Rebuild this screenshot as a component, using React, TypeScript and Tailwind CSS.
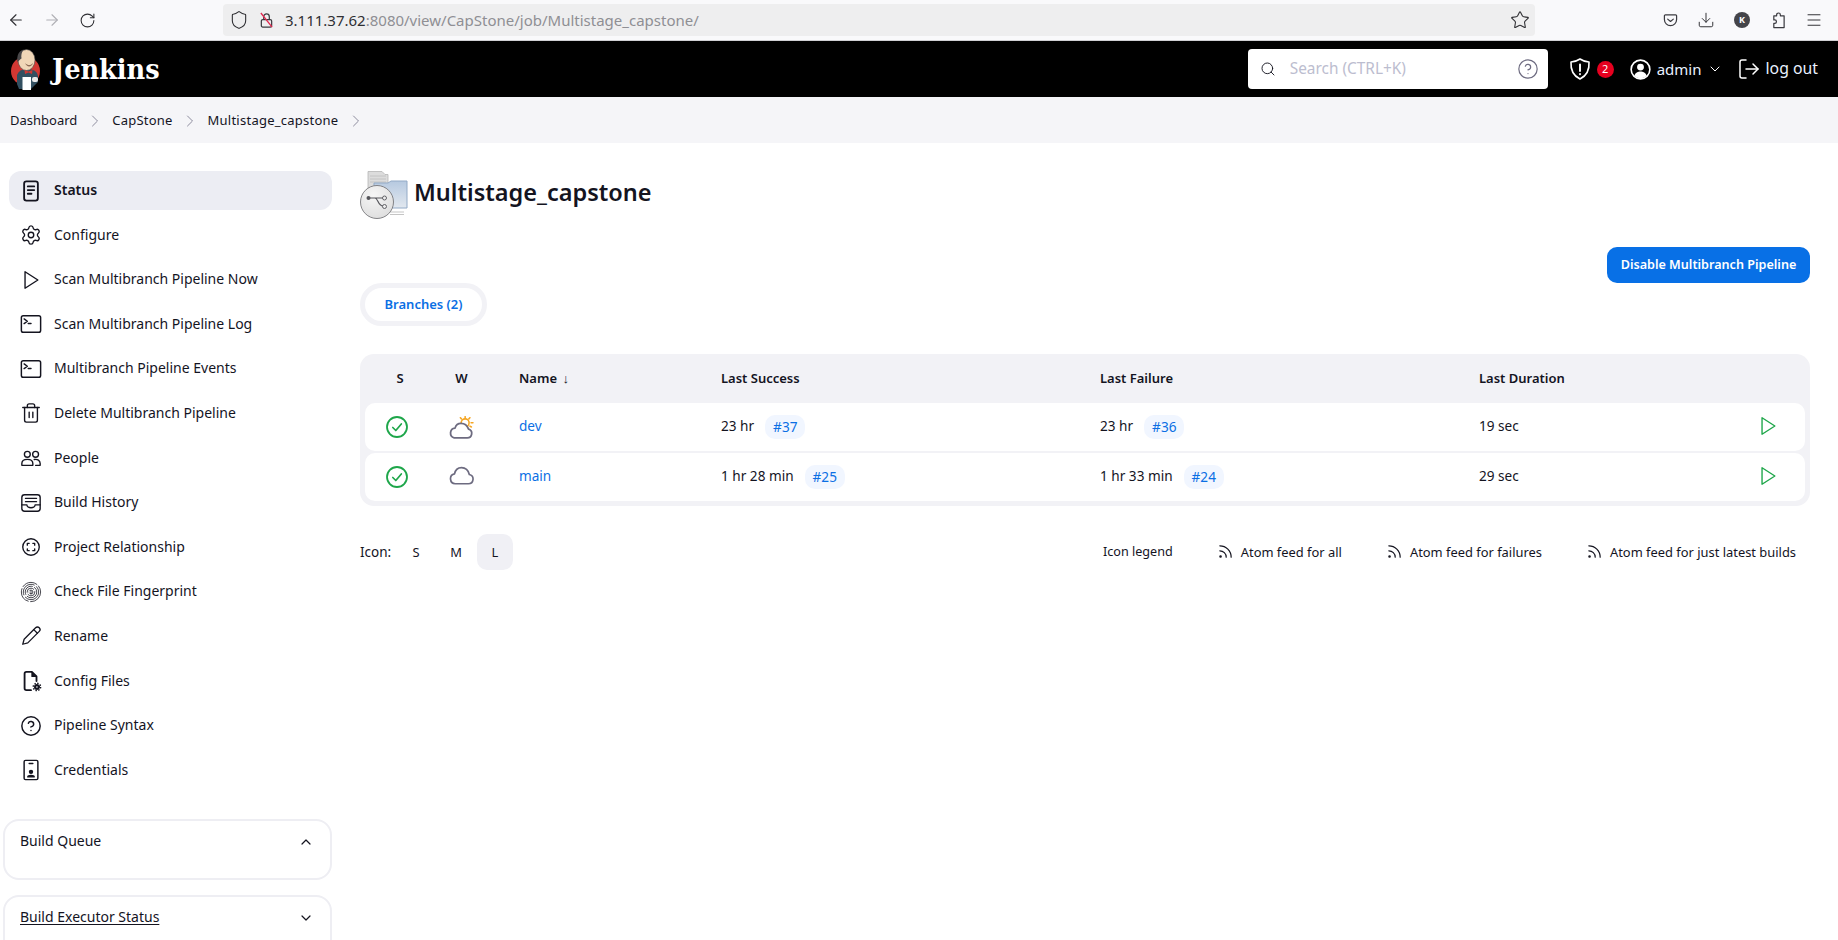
import {
  ArrowLeft, ArrowRight, RotateCw, Shield, Star, Download, Menu, Search, CircleHelp,
  ChevronRight, ChevronDown, ChevronUp, LogOut, Settings, Trash2, Rss,
} from "lucide-react";

const font = "font-['Noto_Sans','Open_Sans',sans-serif]";
const ic = "w-[22px] h-[22px]";
const tableCols = "grid grid-cols-[70px_53px_202px_379px_379px_1fr] items-center";

const Line = ({ children, sw = 1.5 }: { children: React.ReactNode; sw?: number }) => (
  <svg viewBox="0 0 24 24" className={ic} fill="none" stroke="currentColor" strokeWidth={sw} strokeLinecap="round" strokeLinejoin="round">
    {children}
  </svg>
);

const Terminal = () => (
  <Line sw={1.6}>
    <rect x="1.5" y="3" width="21" height="18" rx="2" />
    <path d="M4.5 6.5l3.5 2.5-3.5 2.5M9 11.5h3" />
  </Line>
);

const StatusDoc = () => (
  <Line sw={2}>
    <rect x="4.5" y="1.5" width="15" height="21" rx="2.5" />
    <path d="M8.5 7h7M8.5 11h7M8.5 15h4" />
  </Line>
);

const Badge = () => (
  <Line sw={1.6}>
    <rect x="4.5" y="1.5" width="15" height="21" rx="1.5" />
    <path d="M10 5h4" />
    <circle cx="12" cy="14" r="1.6" fill="currentColor" />
    <path d="M8.5 19.5c.5-2 6.5-2 7 0z" fill="currentColor" />
  </Line>
);

const PlayIcon = () => (
  <Line>
    <path d="M5.5 3l14 9-14 9z" />
  </Line>
);

const People = () => (
  <Line sw={1.5}>
    <circle cx="8" cy="8" r="3.2" />
    <circle cx="17" cy="8" r="3.2" />
    <path d="M2 20v-2c0-3 2.8-4.5 6-4.5s6 1.5 6 4.5v2z" />
    <path d="M15.5 13.6c3.6-.6 6.5 1 6.5 4.4v2h-5" />
  </Line>
);

const History = () => (
  <Line sw={1.5}>
    <rect x="2" y="3" width="20" height="18" rx="3" />
    <path d="M2 14h5.5a4.5 3.2 0 0 0 9 0H22" />
    <path d="M6 7h12M6 10.5h12" />
  </Line>
);

const Relationship = () => (
  <Line sw={1.5}>
    <circle cx="12" cy="12" r="9" />
    <path d="M8 10V8h2M14 8h2v2M16 14v2h-2M10 16H8v-2" />
  </Line>
);

const FingerprintDense = () => (
  <svg viewBox="0 0 24 24" className={ic} fill="none" stroke="currentColor" strokeWidth="0.85" strokeLinecap="round">
    <circle cx="12" cy="12" r="10.5" strokeDasharray="17 2.5" />
    <circle cx="12" cy="12" r="8.4" strokeDasharray="20 3" />
    <circle cx="12" cy="12" r="6.3" strokeDasharray="14 2.5" />
    <circle cx="12" cy="12" r="4.2" strokeDasharray="10 2.5" />
    <circle cx="12" cy="12" r="2.1" strokeDasharray="5 2" />
    <path d="M12 11v3" />
  </svg>
);

const PencilIcon = () => (
  <Line sw={1.4}>
    <path d="M3 21l1.5-5.5L17 3a2.6 2.6 0 0 1 4 4L8.5 19.5z" />
    <path d="M15 5l4 4" />
  </Line>
);

const ConfigFile = () => (
  <Line sw={2}>
    <path d="M12 22H7a2 2 0 0 1-2-2V4a2 2 0 0 1 2-2h6l5 5v5" />
    <path d="M13 2.5v4.5h4.5" fill="currentColor" strokeWidth="1.2" />
    <circle cx="18.5" cy="18.5" r="2.8" fill="currentColor" strokeWidth="1" />
    <circle cx="18.5" cy="18.5" r="4" strokeWidth="1.6" strokeDasharray="1.6 1.5" strokeLinecap="butt" />
    <circle cx="18.5" cy="18.5" r="0.9" fill="#fff" stroke="none" />
  </Line>
);

const CloudIcon = ({ sun }: { sun?: boolean }) => (
  <svg viewBox="0 0 24 22" className="w-[25px] h-[23px] mr-[1px] mb-[-1px]" fill="none" strokeLinecap="round" strokeLinejoin="round">
    {sun ? (
      <>
        <g stroke="#f5a623" strokeWidth="1.5">
          <circle cx="15.5" cy="6.5" r="3.8" />
          <path d="M15.5 .6v1.4M11 1.6l1 1.2M20 1.6l-1 1.2M23 6.500h-1.800M21.500 10.500l-1.400-.8" />
        </g>
        <path d="M5 21h12.500a4.300 4.300 0 0 0 1.300-8.400C17.500 9 14.500 7 11.500 7c-3 0-5 2-5.700 4.600A4.800 4.800 0 0 0 5 21z" fill="#fff" stroke="#6d6b80" strokeWidth="1.7" />
      </>
    ) : (
      <path d="M6 17h12.500a4.500 4.500 0 0 0 1-8.900C18.500 4 15.500 1.500 12 1.500 8.500 1.500 6 4 5.300 7.500A4.800 4.800 0 0 0 6 17z" fill="#fff" stroke="#6d6b80" strokeWidth="1.6" />
    )}
  </svg>
);

const StatusOk = () => (
  <svg viewBox="0 0 22 22" className="w-[22px] h-[22px]" fill="none" stroke="#1ea64a" strokeLinecap="round" strokeLinejoin="round">
    <circle cx="11" cy="11" r="10" strokeWidth="1.8" />
    <path d="M6.800 11.500l3 3 5.500-6.500" strokeWidth="1.7" />
  </svg>
);

const JenkinsLogo = () => (
  <svg viewBox="0 0 50 54" className="w-[50px] h-[54px]">
    <circle cx="20.500" cy="29" r="14.500" fill="#d33833" />
    <path d="M12 42V33q2-6 10-6 10 0 11 7v6l-7 7H14z" fill="#335061" />
    <ellipse cx="21.500" cy="18" rx="8.500" ry="10.500" fill="#f0d6b7" stroke="#49484a" strokeWidth="0.6" />
    <path d="M12.500 20c-1-6 1-11 6-12.500-2 3-2.500 6-2 9-1 .5-2.500 2-4 3.500z" fill="#49484a" />
    <path d="M20 21c3 3 6 2.500 8 0-1 4-6 5-8 0z" fill="#8c6a55" />
    <path d="M19.500 28l4 1.500 4-1.500-.5 4-3.500-1.500-3.500 1.500z" fill="#d33833" />
    <rect x="17.500" y="35" width="8.500" height="13" fill="#fff" />
    <rect x="27" y="35" width="6" height="5" rx="2" fill="#e8e8e8" />
  </svg>
);

const FolderIcon = () => (
  <svg viewBox="0 0 48 48" className="w-[48px] h-[48px] shrink-0">
    <defs>
      <linearGradient id="folderBlue" x1="0" y1="0" x2="0" y2="1">
        <stop offset="0" stopColor="#b6c9e0" />
        <stop offset="1" stopColor="#e2e8ef" />
      </linearGradient>
      <radialGradient id="branchDisc" cx="0.4" cy="0.3" r="0.8">
        <stop offset="0" stopColor="#f6f6f6" />
        <stop offset="1" stopColor="#dcdcdc" />
      </radialGradient>
    </defs>
    <path d="M8 0.500h14l3 3h3v30H8z" fill="#dcdcdc" stroke="#b5b5b5" strokeWidth="0.8" />
    <path d="M10 5h16M10 8h16M10 11h16" stroke="#bdbdbd" strokeWidth="0.8" />
    <path d="M14 12h14l3-2h16v27H14z" fill="url(#folderBlue)" stroke="#93aac6" strokeWidth="1" />
    <path d="M30 41h14M30 43.500h14" stroke="#c5c5c5" strokeWidth="1" />
    <circle cx="17" cy="31" r="16.500" fill="url(#branchDisc)" stroke="#77777a" strokeWidth="0.9" />
    <path d="M8 27h7c3 0 3 8 8 8M15 27h8" fill="none" stroke="#55555a" strokeWidth="1.2" />
    <circle cx="8.500" cy="27" r="2" fill="#55555a" />
    <circle cx="24.500" cy="27" r="2" fill="#eee" stroke="#55555a" strokeWidth="0.9" />
    <circle cx="24.500" cy="35.500" r="2" fill="#eee" stroke="#55555a" strokeWidth="0.9" />
  </svg>
);

const sideItems = [
  { label: "Status", icon: <StatusDoc />, active: true },
  { label: "Configure", icon: <Settings className={ic} strokeWidth={1.5} /> },
  { label: "Scan Multibranch Pipeline Now", icon: <PlayIcon /> },
  { label: "Scan Multibranch Pipeline Log", icon: <Terminal /> },
  { label: "Multibranch Pipeline Events", icon: <Terminal /> },
  { label: "Delete Multibranch Pipeline", icon: <Trash2 className={ic} strokeWidth={1.5} /> },
  { label: "People", icon: <People /> },
  { label: "Build History", icon: <History /> },
  { label: "Project Relationship", icon: <Relationship /> },
  { label: "Check File Fingerprint", icon: <FingerprintDense /> },
  { label: "Rename", icon: <PencilIcon /> },
  { label: "Config Files", icon: <ConfigFile /> },
  { label: "Pipeline Syntax", icon: <CircleHelp className={ic} strokeWidth={1.6} /> },
  { label: "Credentials", icon: <Badge /> },
];

const rows = [
  { name: "dev", sun: true, ok: "23 hr", okN: "#37", bad: "23 hr", badN: "#36", dur: "19 sec" },
  { name: "main", sun: false, ok: "1 hr 28 min", okN: "#25", bad: "1 hr 33 min", badN: "#24", dur: "29 sec" },
];

const Feed = ({ label }: { label: string }) => (
  <div className="flex items-center gap-[7px]">
    <Rss className="w-[17px] h-[17px] text-[#14141f]" strokeWidth={1.7} />
    <span className="pt-[1px]">{label}</span>
  </div>
);

const Run = ({ time, num }: { time: string; num: string }) => (
  <div className="pl-[31px] flex items-center gap-[11px] whitespace-nowrap">
    <span className="pb-[1px]">{time}</span>
    <span className="h-[24px] px-[8px] rounded-[10px] bg-[#f1f6ff] text-[#0b6fe4] flex items-center">{num}</span>
  </div>
);

export default function App() {
  return (
    <div className={`w-[1838px] h-[940px] overflow-hidden bg-white text-[#14141f] ${font}`}>
      {/* Browser chrome */}
      <div className="h-[41px] bg-[#f9f9fb] border-b border-[#d0d0d3] flex items-center text-[#2f2f33]">
        <div className="w-[223px] pl-[7px] flex items-center gap-[18px]">
          <ArrowLeft className="w-[18px] h-[18px]" strokeWidth={1.5} />
          <ArrowRight className="w-[18px] h-[18px] text-[#b0b0b5]" strokeWidth={1.5} />
          <RotateCw className="w-[17px] h-[17px]" strokeWidth={1.5} />
        </div>
        <div className="w-[1312px] h-[32px] bg-[#eeeeef] rounded-[4px] flex items-center pl-[6px] pr-[5px]">
          <Shield className="w-[20px] h-[20px]" strokeWidth={1.3} />
          <svg viewBox="0 0 16 18" className="w-[15px] h-[17px] ml-[10px]" fill="none" stroke="#3b3b40" strokeWidth="1.3">
            <rect x="2.500" y="8" width="11" height="8" rx="1.500" />
            <path d="M5 8V5a3 3 0 0 1 6 0v3" />
            <path d="M2 1l12 15" stroke="#e22850" strokeWidth="1.400" />
          </svg>
          <span className="ml-[11px] text-[15px]">3.111.37.62<span className="text-[#8f8f94]">:8080/view/CapStone/job/Multistage_capstone/</span></span>
          <Star className="w-[20px] h-[20px] ml-auto" strokeWidth={1.3} />
        </div>
        <div className="flex items-center ml-[117px]">
          <span className="w-[36px] flex justify-center">
            <svg viewBox="0 0 16 16" className="w-[15px] h-[15px]" fill="none" stroke="#3b3b40" strokeWidth="1.3" strokeLinecap="round" strokeLinejoin="round">
              <path d="M2.500 2h11a1 1 0 0 1 1 1v4a6.500 6.500 0 0 1-13 0V3a1 1 0 0 1 1-1z" />
              <path d="M5 6.500l3 2.500 3-2.500" />
            </svg>
          </span>
          <span className="w-[36px] flex justify-center"><Download className="w-[18px] h-[18px]" strokeWidth={1.3} /></span>
          <span className="w-[36px] flex justify-center">
            <span className="w-[16px] h-[16px] rounded-full bg-[#444449] text-white text-[9px] font-bold flex items-center justify-center">K</span>
          </span>
          <span className="w-[36px] flex justify-center">
            <svg viewBox="0 0 16 18" className="w-[15px] h-[17px]" fill="none" stroke="#3b3b40" strokeWidth="1.3" strokeLinejoin="round">
              <path d="M6 4V3a2 2 0 0 1 4 0v1h4v12.500H3V12h1a1.800 1.800 0 0 0 0-3.600H3V4z" />
            </svg>
          </span>
          <span className="w-[36px] flex justify-center"><Menu className="w-[18px] h-[18px]" strokeWidth={1.3} /></span>
        </div>
      </div>

      {/* Jenkins header */}
      <header className="h-[56px] bg-black text-white flex items-center">
        <div className="ml-[5px]"><JenkinsLogo /></div>
        <span className="ml-[-3px] text-[28.5px] font-bold font-['DejaVu_Serif_Condensed','DejaVu_Serif','Liberation_Serif',serif]">Jenkins</span>
        <div className="ml-auto flex items-center">
          <div className="w-[300px] h-[40px] bg-white rounded-[4px] flex items-center pl-[12px] pr-[9px] text-[#6d6b80]">
            <Search className="w-[16px] h-[16px] text-[#14141f]" strokeWidth={1.4} />
            <span className="ml-[14px] text-[15.4px] text-[#bcbdcf]">Search (CTRL+K)</span>
            <CircleHelp className="w-[22px] h-[22px] ml-auto" strokeWidth={1.3} />
          </div>
          <svg viewBox="0 0 22 22" className="w-[22px] h-[22px] ml-[21px]" fill="none" stroke="#fff" strokeWidth="1.600" strokeLinecap="round" strokeLinejoin="round">
            <path d="M11 1c3 2 6 3 9 3 .5 7-1 13-9 17C3 17 1.500 11 2 4c3 0 6-1 9-3z" />
            <path d="M11 6.500v6.500M11 16v.2" strokeWidth="1.900" />
          </svg>
          <div className="ml-[6px] w-[17px] h-[17px] rounded-full bg-[#e6001f] text-[11px] flex items-center justify-center">2</div>
          <svg viewBox="0 0 22 22" className="w-[21px] h-[21px] ml-[16px]">
            <circle cx="11" cy="11" r="9.800" fill="none" stroke="#fff" strokeWidth="1.700" />
            <circle cx="11" cy="8.500" r="3.600" fill="#fff" />
            <path d="M4.500 17.500c1-3.500 4-4.500 6.500-4.500s5.500 1 6.500 4.500c-3.500 3.500-9.500 3.500-13 0z" fill="#fff" />
          </svg>
          <span className="ml-[6px] text-[15px] text-[#e9f1ff]">admin</span>
          <ChevronDown className="w-[16px] h-[16px] ml-[5px]" strokeWidth={1.5} />
          <LogOut className="w-[24px] h-[24px] ml-[14px]" strokeWidth={1.5} />
          <span className="ml-[5px] mr-[20px] text-[15.8px] text-[#e9f1ff]">log out</span>
        </div>
      </header>

      {/* Breadcrumb */}
      <nav className="h-[46px] bg-[#f5f5f8] flex items-center pl-[10px] pt-[1px] text-[13px]">
        <span>Dashboard</span>
        <ChevronRight className="w-[20px] h-[20px] mx-[7.5px] text-[#8d8c9e]" strokeWidth={1.2} />
        <span className="tracking-[0.2px]">CapStone</span>
        <ChevronRight className="w-[20px] h-[20px] mx-[7.5px] text-[#8d8c9e]" strokeWidth={1.2} />
        <span className="tracking-[0.25px]">Multistage_capstone</span>
        <ChevronRight className="w-[20px] h-[20px] ml-[7.5px] text-[#8d8c9e]" strokeWidth={1.2} />
      </nav>

      <div className="flex">
        {/* Sidebar */}
        <aside className="w-[360px] shrink-0 pl-[3px] pt-[28px]">
          <div className="w-[323px] ml-[6px] flex flex-col">
            {sideItems.map((it) => (
              <div
                key={it.label}
                className={`h-[39px] mb-[5.6px] rounded-[12px] flex items-center pl-[11px] text-[14px] ${it.active ? "bg-[#ecedf3] font-semibold" : ""}`}
              >
                <span className="w-[22px] flex justify-center">{it.icon}</span>
                <span className="ml-[12px] pb-[2px]">{it.label}</span>
              </div>
            ))}
          </div>
          <div className="w-[329px] mt-[24px] h-[61px] border-2 border-[#eeeef3] rounded-[16px] pl-[15px] pr-[16px] pt-[9px] flex justify-between items-start text-[14px]">
            <span>Build Queue</span>
            <ChevronUp className="w-[16px] h-[16px] mt-[4px]" strokeWidth={1.8} />
          </div>
          <div className="w-[329px] mt-[15px] h-[62px] border-2 border-[#eeeef3] rounded-[16px] pl-[15px] pr-[16px] pt-[9px] flex justify-between items-start text-[14px]">
            <span className="underline underline-offset-2">Build Executor Status</span>
            <ChevronDown className="w-[16px] h-[16px] mt-[4px]" strokeWidth={1.8} />
          </div>
        </aside>

        {/* Main */}
        <main className="flex-1 pr-[28px] pt-[28px]">
          <div className="flex items-start h-[48px]">
            <FolderIcon />
            <h1 className="ml-[6px] mt-[5px] text-[23.5px] leading-[32px] font-semibold">Multistage_capstone</h1>
          </div>

          <div className="mt-[28px] flex justify-end">
            <button className="h-[36px] w-[203px] rounded-[10px] bg-[#0870e6] text-white text-[12.6px] font-semibold">Disable Multibranch Pipeline</button>
          </div>

          <div className="w-[127px] h-[43px] border-[5px] border-[#f2f2f6] rounded-full flex items-center justify-center text-[13px] font-semibold text-[#0b6fe4]">Branches (2)</div>

          {/* Table */}
          <div className="mt-[28px] bg-[#f2f2f6] rounded-[14px] px-[5px] pb-[5px]">
            <div className={`h-[49px] ${tableCols} text-[13px] font-semibold`}>
              <span className="text-center">S</span>
              <span className="text-center">W</span>
              <span className="pl-[31px] whitespace-nowrap">Name <span className="font-normal ml-[2px] text-[#14141f]">↓</span></span>
              <span className="pl-[31px]">Last Success</span>
              <span className="pl-[31px]">Last Failure</span>
              <span className="pl-[31px]">Last Duration</span>
            </div>
            <div className="flex flex-col gap-[2px]">
              {rows.map((r) => (
                <div key={r.name} className={`h-[48px] bg-white rounded-[10px] ${tableCols} text-[13.6px]`}>
                  <div className="pl-[21px] flex"><StatusOk /></div>
                  <div className="flex justify-center"><CloudIcon sun={r.sun} /></div>
                  <span className="pl-[31px] pb-[1px] text-[#0b6fe4]">{r.name}</span>
                  <Run time={r.ok} num={r.okN} />
                  <Run time={r.bad} num={r.badN} />
                  <div className="pl-[31px] pr-[26px] flex items-center justify-between">
                    <span className="pb-[1px]">{r.dur}</span>
                    <span className="text-[#1ea64a] mb-[2px]"><PlayIcon /></span>
                  </div>
                </div>
              ))}
            </div>
          </div>

          {/* Footer row */}
          <div className="mt-[28px] flex items-center text-[12.9px]">
            <span className="w-[37px] pt-[1px] text-[13.5px]">Icon:</span>
            <span className="w-[36px] h-[36px] ml-[1px] pt-[1px] flex items-center justify-center">S</span>
            <span className="w-[36px] h-[36px] ml-[4px] pt-[1px] flex items-center justify-center">M</span>
            <span className="w-[36px] h-[36px] ml-[3px] pt-[1px] rounded-[10px] bg-[#f0f0f5] flex items-center justify-center">L</span>
            <div className="ml-auto mr-[14px] flex items-center gap-[44px]">
              <span className="pt-[1px] text-[12.6px]">Icon legend</span>
              <Feed label="Atom feed for all" />
              <Feed label="Atom feed for failures" />
              <Feed label="Atom feed for just latest builds" />
            </div>
          </div>
        </main>
      </div>
    </div>
  );
}
